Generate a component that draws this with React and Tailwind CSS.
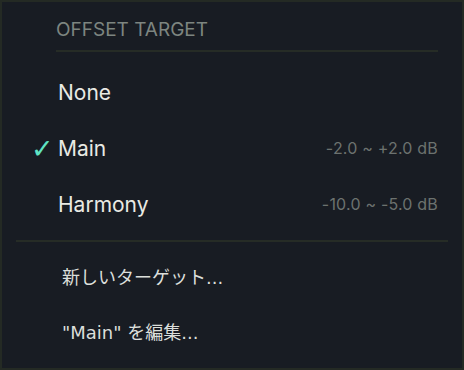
import React from 'react';

const targets = [
  { name: 'None', range: '' },
  { name: 'Main', range: '-2.0 ~ +2.0 dB', checked: true },
  { name: 'Harmony', range: '-10.0 ~ -5.0 dB' },
];

const actions = ['新しいターゲット...', '"Main" を編集...'];

function TargetRow({ name, range, checked }) {
  return (
    <div className="relative flex h-[56px] items-center justify-between pl-[56px] pr-[24px]">
      {checked && (
        <span className="absolute left-[29px] top-1/2 -translate-y-1/2 text-[27px] font-bold leading-none text-[#5fe3c3] [font-family:'DejaVu_Sans',sans-serif]">
          ✓
        </span>
      )}
      <span className="text-[21px] leading-none text-[#e9eae4]">{name}</span>
      {range && <span className="text-[16px] leading-none tracking-[0.2px] text-[#6c726f]">{range}</span>}
    </div>
  );
}

export default function App() {
  return (
    <div className="h-[370px] w-[464px] border-2 border-[#242a24] bg-[#181c23] [font-family:Inter,'Noto_Sans_CJK_JP',sans-serif]">
      <div className="pl-[54px] pr-[24px] pt-[16px]">
        <div className="h-[24px] text-[19px] leading-[24px] text-[#7d8580]">OFFSET TARGET</div>
        <div className="mt-[8px] h-[2px] bg-[#262c26]" />
      </div>

      <div className="mt-[12px]">
        {targets.map((t) => (
          <TargetRow key={t.name} {...t} />
        ))}
      </div>

      <div className="mx-[14px] mt-[8px] h-[2px] bg-[#262c26]" />

      <div className="pl-[60px] pt-[8px]">
        {actions.map((a) => (
          <div
            key={a}
            className="flex h-[55px] items-center text-[18px] leading-none text-[#dcdfdb] [font-family:'DejaVu_Sans','Noto_Sans_CJK_JP',sans-serif]"
          >
            {a}
          </div>
        ))}
      </div>
    </div>
  );
}
